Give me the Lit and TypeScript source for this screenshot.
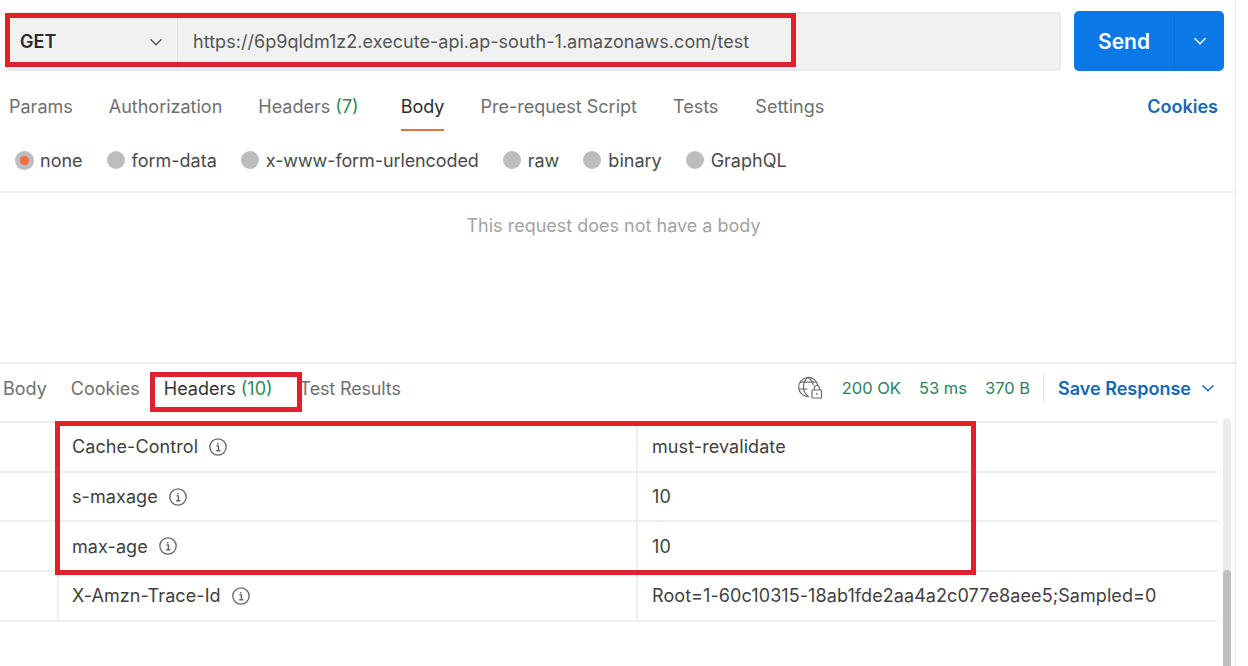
import { LitElement, html, css } from "lit";
import { customElement } from "lit/decorators.js";

const chevron = (c: string, w = 14) => html`<svg width=${w} height=${w} viewBox="0 0 14 14" fill="none" stroke=${c} stroke-width="1.4"><path d="M1.5 4.2 7 9.8l5.5-5.6"/></svg>`;
const info = html`<svg class="info" width="18" height="18" viewBox="0 0 18 18" fill="none" stroke="#666"><circle cx="9" cy="9" r="8.2" stroke-width="1.3"/><path d="M7.4 7.9h2v4.8M7.2 12.8h4.2M8.8 5v1.5" stroke-width="1.4"/></svg>`;
const globe = html`<svg width="26" height="24" viewBox="0 0 26 24" fill="none" stroke="#6b6b6b" stroke-width="1.2">
  <path d="M12 20.6A9.6 9.6 0 1 1 20.8 9.6"/><path d="M11 1.2C5 6 5 15.5 11 20.4M11 1.2c3 2.2 4.8 5 5.3 8M2.8 6.2h16M1.5 13h9"/>
  <rect x="15" y="14" width="9.5" height="8" rx=".8"/><path d="M17.3 14v-2a2.5 2.5 0 0 1 5 0v2M19.8 17v2"/></svg>`;

const rows = [
  ["Cache-Control", "must-revalidate"],
  ["s-maxage", "10"],
  ["max-age", "10"],
  ["X-Amzn-Trace-Id", "Root=1-60c10315-18ab1fde2aa4a2c077e8aee5;Sampled=0"],
];

@customElement("app-root")
export class AppRoot extends LitElement {
  static styles = css`
    :host { display: block; width: 1248px; height: 666px; background: #fff; overflow: hidden; position: relative;
      font-family: Inter, "Noto Sans", sans-serif; font-size: 18px; color: #3c3c3c; }
    * { box-sizing: border-box; }
    .page { width: 1236px; height: 666px; border-right: 1px solid #ececec; display: flex; flex-direction: column; position: relative; }
    .top { display: flex; padding: 11px 11px 0 6px; gap: 13px; height: 71px; }
    .url { flex: 1; height: 59px; margin-top: 1px; background: #f1f1f1; border: 2px solid #e9e9e9; border-radius: 4px; display: flex; align-items: center; }
    .method { width: 170px; height: 100%; display: flex; align-items: center; justify-content: space-between; padding: 0 14px 0 12px; border-right: 1px solid #e2e2e2; font-weight: 600; color: #2b2b2b; }
    .addr { padding-left: 15px; color: #555; letter-spacing: .035px; }
    .send { width: 150px; height: 60px; background: #0b78e8; border-radius: 5px; color: #fff; display: flex; }
    .send b { width: 101px; display: flex; align-items: center; justify-content: center; font-size: 21px; font-weight: 600; border-right: 1px solid #0a6ed6; }
    .send span { flex: 1; display: flex; align-items: center; justify-content: center; }
    .tabs { display: flex; align-items: center; height: 47px; margin-top: 13px; padding: 0 17px 0 9px; gap: 36px; color: #6f6f6f; }
    .tab { position: relative; line-height: 45px; padding-bottom: 2px; white-space: nowrap; }
    .tab.on { color: #2e2e2e; margin-left: 6px; }
    .tab.on::after { content: ""; position: absolute; left: 0; right: 0; bottom: 0; height: 2px; background: #e8703c; }
    .tab.shift { margin-left: 1px; }
    .green { color: #2c8a57; }
    .link { margin-left: auto; color: #1868b1; font-weight: 600; padding-bottom: 2px; }
    .radios { display: flex; align-items: center; height: 63px; border-bottom: 2px solid #f0f0f0; padding: 0 0 1px 15px; margin-top: -1px; }
    .radio { display: flex; align-items: center; gap: 7px; margin-right: 24px; color: #4a4a4a; white-space: nowrap; }
    .radio.first { gap: 6px; }
    .radio.tight { letter-spacing: -.1px; }
    .radio i { width: 18px; height: 18px; border-radius: 50%; background: #bdbdbd; display: flex; align-items: center; justify-content: center; }
    .radio i.sel { width: 19px; height: 19px; }
    .radio i.sel::after { content: ""; width: 9px; height: 9px; border-radius: 50%; background: #f26b3a; }
    .empty { height: 171px; border-bottom: 2px solid #ededed; padding-top: 22px; text-align: center; color: #a3a3a3; padding-right: 8px; }
    .rtabs { height: 57px; display: flex; align-items: center; padding: 0 20px 9px 3px; color: #707070; }
    .rtabs .t { margin-right: 24px; white-space: nowrap; }
    .rtabs .cur { color: #333; margin-right: 27px; }
    .rtabs .narrow { letter-spacing: -.15px; }
    .meta { margin-left: auto; display: flex; align-items: center; color: #2f7f57; font-size: 16.5px; }
    .meta svg:first-child { margin-right: 19px; }
    .meta span { margin-right: 18px; white-space: nowrap; }
    .meta span.last { margin-right: 13px; }
    .sep { width: 1px; height: 28px; background: #e6e6e6; margin-right: 14px; }
    .save { color: #1868b1; font-weight: 600; font-size: 18px; margin-right: 10px; white-space: nowrap; }
    .table { width: 1218px; border-top: 2px solid #eee; }
    .row { display: grid; grid-template-columns: 59px 579px 1fr; height: 49.7px; border-bottom: 2px solid #eee; color: #3f3f3f; letter-spacing: .08px; }
    .row > div { display: flex; align-items: center; border-right: 2px solid #eee; padding-left: 14px; gap: 11px; }
    .row > div:nth-child(2) { padding-left: 13px; }
    .row > div:first-child { padding: 0; }
    .row > div:last-child { border-right: 0; }
    .scroll { position: absolute; left: 1223px; top: 418px; width: 8px; height: 248px; background: #ececec; border-radius: 4px 4px 0 0; }
    .scroll::after { content: ""; position: absolute; left: 0; right: 0; top: 152px; bottom: 0; background: #bfbfbf; border-radius: 4px 4px 0 0; }
    .mark { position: absolute; border: 5px solid #e0202c; pointer-events: none; }
    .m1 { left: 5px; top: 13px; width: 791px; height: 54px; }
    .m2 { left: 150px; top: 372px; width: 152px; height: 40px; }
    .m3 { left: 55px; top: 421px; width: 921px; height: 154px; }
  `;

  render() {
    return html`<div class="page">
      <div class="top">
        <div class="url">
          <div class="method">GET ${chevron("#555")}</div>
          <div class="addr">https://6p9qldm1z2.execute-api.ap-south-1.amazonaws.com/test</div>
        </div>
        <div class="send"><b>Send</b><span>${chevron("#fff")}</span></div>
      </div>
      <div class="tabs">
        <div class="tab">Params</div>
        <div class="tab">Authorization</div>
        <div class="tab">Headers <span class="green">(7)</span></div>
        <div class="tab on">Body</div>
        <div class="tab">Pre-request Script</div>
        <div class="tab">Tests</div>
        <div class="tab shift">Settings</div>
        <div class="link">Cookies</div>
      </div>
      <div class="radios">
        <div class="radio first"><i class="sel"></i>none</div>
        <div class="radio"><i></i>form-data</div>
        <div class="radio tight"><i></i>x-www-form-urlencoded</div>
        <div class="radio"><i></i>raw</div>
        <div class="radio"><i></i>binary</div>
        <div class="radio"><i></i>GraphQL</div>
      </div>
      <div class="empty">This request does not have a body</div>
      <div class="rtabs">
        <div class="t">Body</div>
        <div class="t">Cookies</div>
        <div class="t cur">Headers <span class="green">(10)</span></div>
        <div class="t narrow">Test Results</div>
        <div class="meta">
          ${globe}
          <span>200 OK</span><span>53 ms</span><span class="last">370 B</span>
          <div class="sep"></div>
          <div class="save">Save Response</div>
          ${chevron("#1868b1")}
        </div>
      </div>
      <div class="table">
        ${rows.map(([k, v]) => html`<div class="row"><div></div><div>${k} ${info}</div><div>${v}</div></div>`)}
      </div>
      <div class="scroll"></div>
    </div>
    <div class="mark m1"></div><div class="mark m2"></div><div class="mark m3"></div>`;
  }
}
